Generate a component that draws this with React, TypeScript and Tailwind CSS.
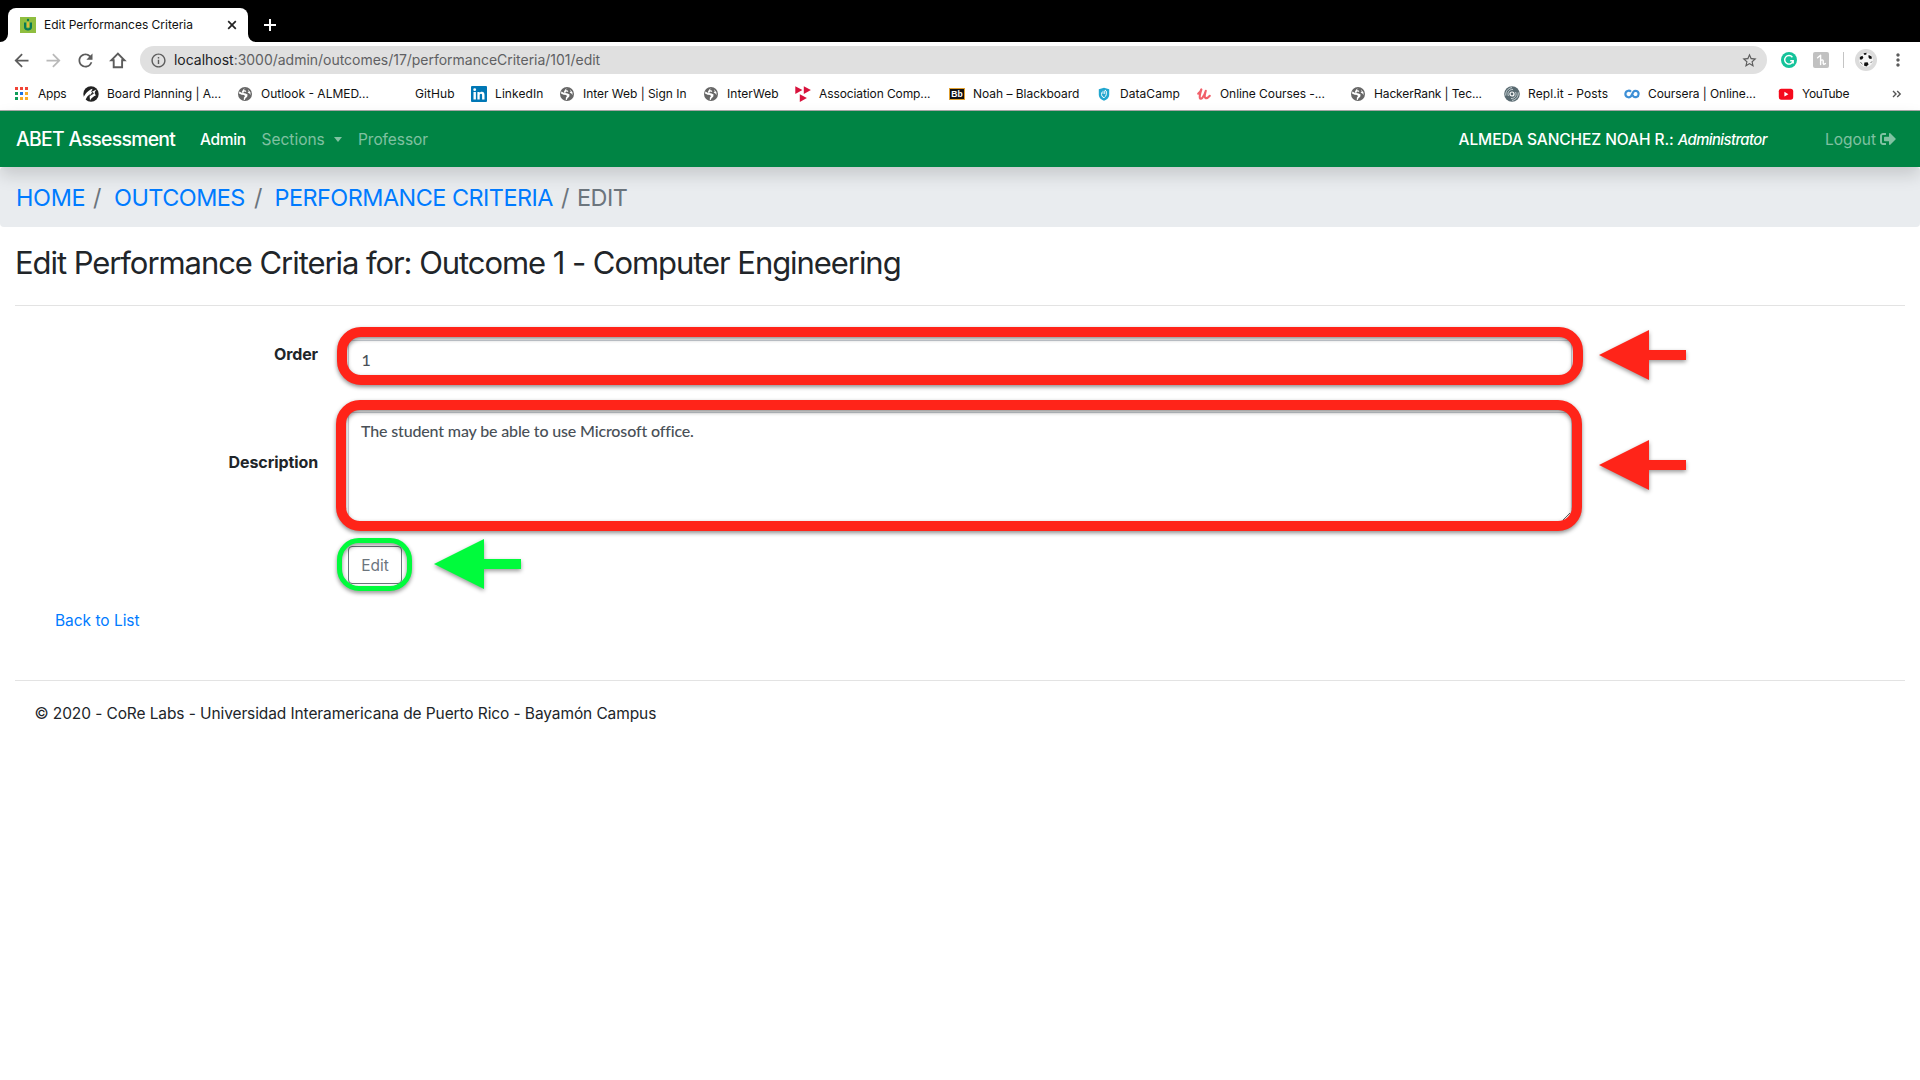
import React from 'react';
import { MdArrowBack, MdArrowForward, MdRefresh, MdStarBorder, MdInfoOutline, MdMoreVert } from 'react-icons/md';
import { FaSignOutAlt } from 'react-icons/fa';

function Globe() {
  return (
    <svg viewBox="0 0 16 16" className="size-4">
      <circle cx="8" cy="8" r="7" fill="#666" />
      <path d="M8.6 2.2 6.6 4 8.8 4.4 9.3 6 7.1 5.6 6.2 7.1 8.7 7.5 10.6 8.6 10.2 10.8 8.5 12.2 7.7 14 6.8 13.9 6.9 11.6 7.9 10.5 7.3 9.1 4.6 8.7 2 7.6 2.3 5.6 4.3 6.5 5.4 7.2 5 5.4 6.4 3.3Z" fill="#fff" />
      <path d="M10.8 3.2 13.4 6.2 13.6 8.9 12.4 7.5 10.6 6.6 11.8 5.6Z" fill="#fff" />
    </svg>
  );
}

function AppsIcon() {
  const dots = ['#f14436', '#f14436', '#f14436', '#0f9d58', '#1a73e8', '#f9ab28', '#0f9d58', '#f9ab28', '#f9ab28'];
  return (
    <svg viewBox="0 0 16 16" className="size-4">
      {dots.map((c, i) => (
        <rect key={i} x={1 + (i % 3) * 5} y={1 + Math.floor(i / 3) * 5} width="3" height="3" fill={c} />
      ))}
    </svg>
  );
}

function BoardIcon() {
  return (
    <svg viewBox="0 0 16 16" className="size-4">
      <circle cx="8" cy="8" r="7.7" fill="#222" />
      <path d="M0 12.4C2.4 7.6 5 4.2 9.6 2.8L8 6.2 13.4 3.6C11.4 6 11 8 13 9.2 10.2 10.3 8.4 12 7 14.6 7 12 6 10.8 7.4 8.1 4.8 9.6 3.4 11.6 2.6 14Z" fill="#fff" />
      <path d="M9.5 5.8 6.2 10.5 11 7.4Z" fill="#333" />
    </svg>
  );
}

function LinkedInIcon() {
  return (
    <svg viewBox="0 0 16 16" className="size-4">
      <rect width="16" height="16" rx="1" fill="#0077b5" />
      <circle cx="3.7" cy="3.7" r="1.4" fill="#fff" />
      <path d="M2.5 6h2.4v7.5H2.5ZM6.4 6h2.3v1c.4-.7 1.2-1.2 2.2-1.2 2.1 0 2.6 1.4 2.6 3.3v4.4h-2.4V9.7c0-.9 0-1.9-1.1-1.9-1.2 0-1.3.9-1.3 1.8v3.9H6.4Z" fill="#fff" />
    </svg>
  );
}

function AcmIcon() {
  return (
    <svg viewBox="0 0 16 16" className="size-4">
      <path d="M.3.2 7.4 4 .3 8ZM8.8.2 15.9 4 8.8 8ZM4.8 8.2 11.9 12.1 4.8 16Z" fill="#d8123c" />
    </svg>
  );
}

function BbIcon() {
  return (
    <svg viewBox="0 0 16 16" className="size-4">
      <rect x=".5" y="2.5" width="15" height="11" fill="#111" stroke="#e0a030" />
      <text x="8" y="11" textAnchor="middle" fontSize="8.5" fontWeight="700" fontFamily="Liberation Sans, sans-serif" fill="#fff">Bb</text>
    </svg>
  );
}

function DataCampIcon() {
  return (
    <svg viewBox="0 0 16 16" className="size-4">
      <path d="M8 1.8 13.2 3.2V9C13.2 11.6 11 13.6 8 14.8 5 13.6 2.8 11.6 2.8 9V3.2Z" fill="#22a7cf" />
      <path d="M6 6.2C5.2 7.2 5.2 9.6 7 11.4H8.4C10.4 10 10.6 8 10.2 5L9 4" fill="none" stroke="#fff" strokeWidth="1" />
      <path d="M7 4.8V8M8.6 4.6V8" stroke="#fff" strokeWidth=".8" />
    </svg>
  );
}

function UdemyIcon() {
  return (
    <svg viewBox="0 0 16 16" className="size-4">
      <path d="M2.2 7.6C3.6 6.6 4.8 5.4 5.4 3.4 4.4 6.5 3.4 10 3.8 11.8 4.6 14.2 8 11.4 9.8 4.8 8.8 8.4 8.2 11 9.3 11.8 10.6 12.7 12.6 11.2 13.8 9.8" fill="none" stroke="#f1606a" strokeWidth="2.1" strokeLinecap="round" strokeLinejoin="round" />
    </svg>
  );
}

function ReplIcon() {
  return (
    <svg viewBox="0 0 16 16" className="size-4">
      <circle cx="8" cy="8" r="7.8" fill="#586970" />
      <circle cx="8" cy="8" r="2" fill="none" stroke="#fff" strokeWidth="1.2" />
      <path d="M4.4 10C3 6.6 5 3.4 9 3.4M11.6 6C13 9.4 11 12.6 7 12.6M1.8 9.6C1.4 5.4 4 2.2 8 1.6M14.2 6.4C14.6 10.6 12 13.8 8 14.4" fill="none" stroke="#d3dcdf" strokeWidth=".9" />
    </svg>
  );
}

function CourseraIcon() {
  return (
    <svg viewBox="0 0 16 16" className="size-4">
      <path d="M7 5.7C5.3 3.9 1.4 4.7 1.4 8S5.3 12.1 7 10.3L9.3 5.9C11 3.9 14.6 4.9 14.6 8S11 12.1 9.3 10.3L8.6 9" fill="none" stroke="#3d8fd6" strokeWidth="2.2" strokeLinejoin="round" />
    </svg>
  );
}

function YouTubeIcon() {
  return (
    <svg viewBox="0 0 16 16" className="size-4">
      <rect x=".8" y="2.7" width="14.4" height="11" rx="2.6" fill="#f50a1c" />
      <path d="M6.4 5.8 10.4 8.2 6.4 10.6Z" fill="#fff" />
    </svg>
  );
}

const bookmarks = [
  { label: 'Apps', icon: <AppsIcon />, cls: 'w-[69px] tracking-[-0.2px]' },
  { label: 'Board Planning | A...', icon: <BoardIcon />, cls: 'w-[154px] tracking-[-0.05px]' },
  { label: 'Outlook - ALMED...', icon: <Globe />, cls: 'w-[154px]' },
  { label: 'GitHub', icon: null, cls: 'w-[80px] tracking-[0.1px]' },
  { label: 'LinkedIn', icon: <LinkedInIcon />, cls: 'w-[88px] tracking-[0.09px]' },
  { label: 'Inter Web | Sign In', icon: <Globe />, cls: 'w-[144px] tracking-[-0.03px]' },
  { label: 'InterWeb', icon: <Globe />, cls: 'w-[92px] tracking-[0.05px]' },
  { label: 'Association Comp...', icon: <AcmIcon />, cls: 'w-[154px] tracking-[-0.1px]' },
  { label: 'Noah – Blackboard', icon: <BbIcon />, cls: 'w-[147px] tracking-[-0.03px]' },
  { label: 'DataCamp', icon: <DataCampIcon />, cls: 'w-[100px] tracking-[0.05px]' },
  { label: 'Online Courses -...', icon: <UdemyIcon />, cls: 'w-[154px] tracking-[-0.06px]' },
  { label: 'HackerRank | Tec...', icon: <Globe />, cls: 'w-[154px] tracking-[-0.13px]' },
  { label: 'Repl.it - Posts', icon: <ReplIcon />, cls: 'w-[120px] tracking-[0.1px]' },
  { label: 'Coursera | Online...', icon: <CourseraIcon />, cls: 'w-[154px] tracking-[-0.08px]' },
  { label: 'YouTube', icon: <YouTubeIcon />, cls: 'w-[114px] tracking-[-0.3px]' },
];

function TabStrip() {
  return (
    <div className="flex h-[42px] items-end bg-black">
      <div className="relative ml-2 flex h-[34px] w-[240px] items-center rounded-t-lg bg-white pl-3 pr-2.5">
        <svg viewBox="0 0 8 8" className="absolute -left-2 bottom-0 size-2"><path d="M8 0V8H0A8 8 0 0 0 8 0Z" fill="#fff" /></svg>
        <svg viewBox="0 0 8 8" className="absolute -right-2 bottom-0 size-2"><path d="M0 0V8H8A8 8 0 0 1 0 0Z" fill="#fff" /></svg>
        <svg viewBox="0 0 16 16" className="size-4">
          <rect width="16" height="16" fill="#8fbe3f" />
          <path d="M4 5.5H6.2V10C6.2 11.8 9.8 11.8 9.8 10V5.5H12V10.3C12 14.6 4 14.6 4 10.3Z" fill="#087a56" />
          <circle cx="8" cy="3" r="1.2" fill="#087a56" />
          <path d="M7.2 5.2H8.8V10H7.2Z" fill="#f4b740" />
        </svg>
        <span className="ml-2 flex-1 text-xs tracking-[-0.02px] text-[#111]">Edit Performances Criteria</span>
        <svg viewBox="0 0 10 10" className="mr-px size-2.5"><path d="M1.2 1.2 8.8 8.8M8.8 1.2 1.2 8.8" stroke="#222" strokeWidth="1.7" /></svg>
      </div>
      <svg viewBox="0 0 12 12" className="mb-[11px] ml-4 size-3"><path d="M6 0V12M0 6H12" stroke="#fff" strokeWidth="2" /></svg>
    </div>
  );
}

function Toolbar() {
  return (
    <div className="flex h-9 items-center pl-[11px] text-[#5c5c5c]">
      <div className="flex items-center gap-[11px]">
        <MdArrowBack size={21} />
        <MdArrowForward size={21} className="text-[#b9b9b9]" />
        <MdRefresh size={21} />
        <svg viewBox="0 0 21 21" className="size-[21px]">
          <path d="M10.9 3.6 4.3 10.3H6.7V17.2H15.1V10.3H17.5Z" fill="none" stroke="#5c5c5c" strokeWidth="1.9" />
        </svg>
      </div>
      <div className="ml-[12px] flex h-7 w-[1627px] items-center rounded-full bg-[#e0e0e0] px-[9.5px]">
        <MdInfoOutline size={17} />
        <span className="ml-[7.5px] flex-1 text-sm leading-5 tracking-[-0.02px] text-[#5f6063]">
          <span className="text-[#202124]">localhost</span>:3000/admin/outcomes/17/performanceCriteria/101/edit
        </span>
        <MdStarBorder size={17} />
      </div>
      <span className="ml-[14px] flex size-4 items-center justify-center rounded-full bg-[#15c39a]">
        <svg viewBox="0 0 12 12" className="size-3">
          <path d="M9.4 3.2A4.3 4.3 0 1 0 10.2 6.7H7.2M10.2 6.7V9.4" fill="none" stroke="#fff" strokeWidth="1.4" />
        </svg>
      </span>
      <span className="ml-4 flex size-4 items-center justify-center rounded-xs bg-[#c1c1c1]">
        <svg viewBox="0 0 16 16" className="size-4">
          <path d="M4.6 5.8 7.6 3.2V12.6M7.6 9C8.4 7.4 10.4 7.4 10.2 9.4V11.4L10.8 12.4 12.4 11.6" fill="none" stroke="#fff" strokeWidth="1.4" strokeLinecap="round" strokeLinejoin="round" />
        </svg>
      </span>
      <span className="ml-[14px] h-4 w-px bg-[#c4c4c4]" />
      <svg viewBox="0 0 22 22" className="ml-[11px] size-[22px]">
        <circle cx="11" cy="11" r="11" fill="#dcdcdc" />
        <circle cx="11" cy="11" r="7" fill="#f6f6f6" />
        <path d="M8.6 4.2 11.6 3.8 11.2 5.8H9Z M4.8 8 7.4 6.8 8.4 8.8 7 10.6 4.8 10.4Z M13.6 6 16.4 7.2 17 9.6 14.8 10 13.4 8.2Z M9.4 13.4 12.6 13.2 13.6 15.4 11.4 17.6 9 16.4Z" fill="#111" />
        <path d="M5.4 13 7.4 15.4M15.6 14 17 12.4" stroke="#777" />
      </svg>
      <MdMoreVert size={20} className="ml-[11px]" />
    </div>
  );
}

function BookmarksBar() {
  return (
    <div className="flex h-[33px] items-center border-b border-[#a9a9a9] pb-px pl-[14px] text-xs text-[#111]">
      {bookmarks.map((b) => (
        <div key={b.label} className={`flex shrink-0 items-center gap-2 whitespace-nowrap ${b.cls}`}>
          <span className="size-4">{b.icon}</span>
          {b.label}
        </div>
      ))}
      <svg viewBox="0 0 10 8" className="h-2 w-2.5">
        <path d="M1 1 4 4 1 7M5.2 1 8.2 4 5.2 7" fill="none" stroke="#555" strokeWidth="1.4" />
      </svg>
    </div>
  );
}

function Navbar() {
  return (
    <nav className="relative z-10 flex h-14 items-center bg-[#008444] px-4 pt-0.5 text-[15.5px] text-white/50 shadow-[0_8px_16px_rgba(0,0,0,0.15)]">
      <span className="w-[184px] whitespace-nowrap text-[19.4px] font-medium tracking-[-0.7px] text-white">ABET Assessment</span>
      <span className="w-[61.5px] font-medium tracking-[-0.35px] text-white">Admin</span>
      <span className="flex w-[96.5px] items-center">
        Sections
        <span className="mb-0.5 ml-[9px] border-x-[4.5px] border-t-[5px] border-x-transparent border-t-white/50" />
      </span>
      <span className="flex-1 tracking-[-0.05px]">Professor</span>
      <span className="mr-[58px] whitespace-nowrap font-medium tracking-[-0.08px] text-white">
        ALMEDA SANCHEZ NOAH R.: <i className="text-[14.8px] tracking-[-0.55px]">Administrator</i>
      </span>
      <span className="mr-2 flex items-center gap-1">
        Logout
        <FaSignOutAlt size={16} className="mb-0.5" />
      </span>
    </nav>
  );
}

function Breadcrumb() {
  return (
    <div className="flex h-[60px] items-center whitespace-nowrap rounded bg-[#e9ecef] pl-4 pt-0.5 text-[23.4px] tracking-[-0.5px] text-[#6c757d]">
      <span className="w-[77px] tracking-[-0.3px] text-[#007bff]">HOME</span>
      <span className="w-[21px]">/</span>
      <span className="w-[140px] text-[#007bff]">OUTCOMES</span>
      <span className="w-[20.5px]">/</span>
      <span className="w-[286.5px] text-[#007bff]">PERFORMANCE CRITERIA</span>
      <span className="w-[16px]">/</span>
      <span>EDIT</span>
    </div>
  );
}

function Arrow({ color, className }: { color: string; className: string }) {
  return (
    <svg viewBox="0 0 87 50" className={`absolute h-[50px] w-[87px] overflow-visible drop-shadow-[0_2px_2px_rgba(0,0,0,0.4)] ${className}`}>
      <path d="M0 25 50 0V20H87V30H50V50Z" fill={color} />
    </svg>
  );
}

function EditForm() {
  return (
    <form className="pt-[34px]" onSubmit={(e) => e.preventDefault()}>
      <div className="relative flex h-[38px] items-start">
        <label className="w-[303px] pt-0.5 text-right text-[16px] font-bold leading-6 tracking-[-0.1px]">Order</label>
        <input
          defaultValue="1"
          className="ml-[30px] h-[38px] w-[1224px] rounded border border-[#ced4da] pb-0 pl-[12.5px] pr-3 pt-px font-[Lato,sans-serif] text-[16px] font-medium text-[#495057] outline-none"
        />
        <div className="absolute -top-[13px] left-[322px] h-[58px] w-[1246px] rounded-[24px] border-[10px] border-[#ff2419] drop-shadow-[0_2px_2px_rgba(0,0,0,0.45)]" />
        <Arrow color="#ff2419" className="-top-[10px] left-[1584px]" />
      </div>
      <div className="relative mt-[34px] flex h-[110px] items-center">
        <label className="w-[303px] pb-2.5 text-right text-[16px] font-bold leading-6 tracking-[-0.1px]">Description</label>
        <textarea
          defaultValue="The student may be able to use Microsoft office."
          className="ml-[30px] h-[110px] w-[1224px] rounded border border-[#ced4da] px-3 py-1.5 font-[Lato,sans-serif] text-[16px] font-medium leading-6 tracking-[-0.15px] text-[#495057] outline-none"
        />
        <div className="absolute -top-[12px] left-[321px] h-[131px] w-[1246px] rounded-[24px] border-[10px] border-[#ff2419] drop-shadow-[0_2px_2px_rgba(0,0,0,0.45)]" />
        <Arrow color="#ff2419" className="top-[28px] left-[1584px]" />
      </div>
      <div className="relative mt-6 flex h-[38px]">
        <button className="ml-[333px] h-[38px] w-[54px] rounded border border-[#6c757d] pt-0.5 text-[#6c757d]">Edit</button>
        <div className="absolute -top-[8px] left-[322px] h-[53px] w-[75px] rounded-[22px] border-[5px] border-[#00fb3c] drop-shadow-[0_2px_2px_rgba(0,0,0,0.45)]" />
        <Arrow color="#00fb3c" className="-top-[7px] left-[419px]" />
      </div>
    </form>
  );
}

export default function App() {
  return (
    <div className="h-[1080px] w-[1920px] overflow-hidden bg-white font-[Inter,sans-serif] text-[#212529]">
      <TabStrip />
      <Toolbar />
      <BookmarksBar />
      <Navbar />
      <Breadcrumb />
      <main className="px-[15px] text-[15.5px]">
        <h1 className="h-[78px] whitespace-nowrap pt-[17px] text-[31px] leading-[38px] tracking-[-1.06px]">
          Edit Performance Criteria for: Outcome 1 - Computer Engineering
        </h1>
        <hr className="border-[#e3e3e3]" />
        <EditForm />
        <a className="mt-[25px] block pl-10 leading-6 tracking-[-0.03px] text-[#007bff]">Back to List</a>
        <hr className="mt-[47px] border-[#e3e3e3]" />
        <footer className="pl-[19.5px] pt-[21px] leading-6 tracking-[-0.1px]">
          © 2020 - CoRe Labs - Universidad Interamericana de Puerto Rico - Bayamón Campus
        </footer>
      </main>
    </div>
  );
}
